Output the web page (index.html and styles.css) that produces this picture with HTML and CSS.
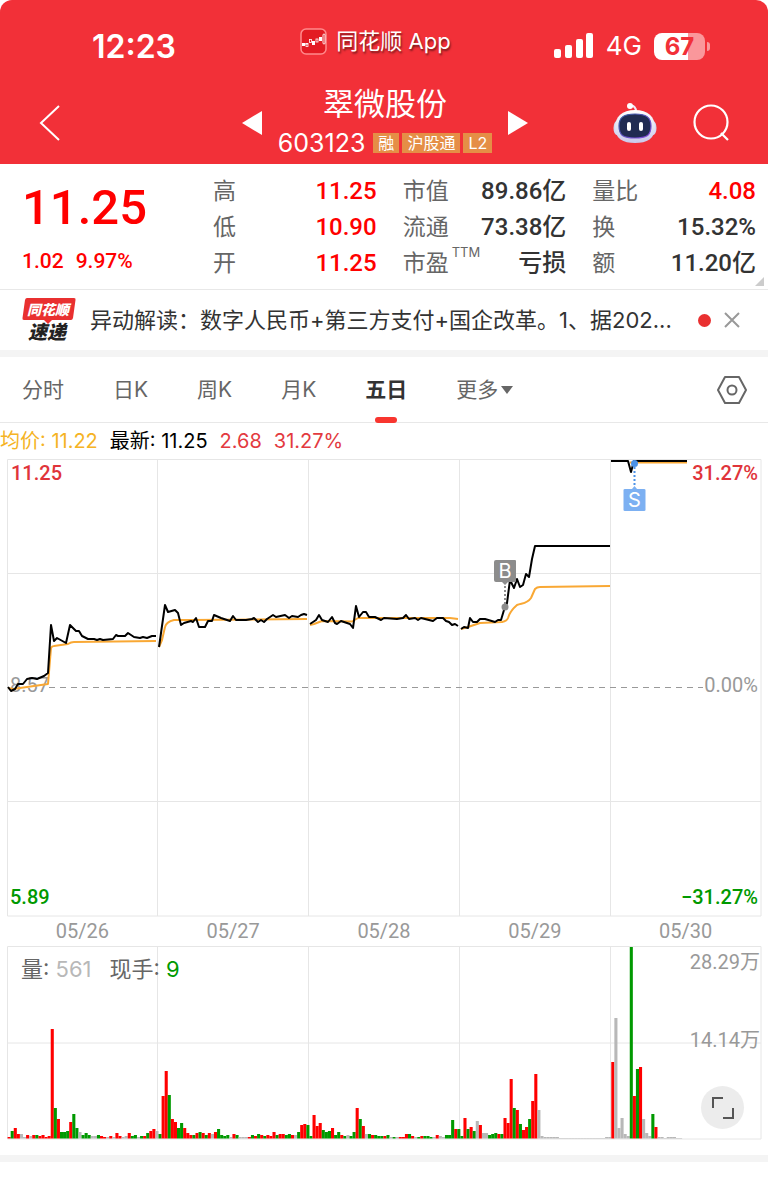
FILE: index.html
```
<!DOCTYPE html>
<html lang="zh-CN">
<head>
  <meta charset="UTF-8">
  <meta name="viewport" content="width=device-width, initial-scale=1.0">
  <title>翠微股份 603123</title>
  <link rel="stylesheet" href="styles.css">
</head>
<body>
  <header class="header">
    <div class="status-bar">
      <div class="clock">12:23</div>
      <div class="app-name">
        <svg class="app-logo" viewBox="0 0 27 27" width="27" height="27" fill="none">
          <rect x="1" y="1" width="25" height="25" rx="5" fill="#e31b23" stroke="#ff8a8c" stroke-width="1.5"/>
          <path d="M2 17h3M4 16h4" stroke="#fff"/>
          <rect x="2" y="15" width="3" height="3" fill="#fff"/>
          <rect x="6" y="15.500" width="2" height="3" stroke="#fff" stroke-width=".8"/>
          <rect x="9.500" y="11.500" width="2" height="3" stroke="#fff" stroke-width=".8"/>
          <rect x="12" y="13" width="3" height="4" fill="#fff"/>
          <rect x="16" y="11" width="2" height="3" stroke="#fff" stroke-width=".8"/>
          <rect x="19" y="9" width="3" height="4" fill="#fff"/>
          <rect x="23" y="6" width="2" height="10" rx="1" stroke="#fff" stroke-width=".9"/>
        </svg>
        <span>同花顺 App</span>
      </div>
      <div class="status-icons">
        <svg viewBox="0 0 40 26" width="40" height="26" fill="#fff">
          <rect x="0" y="16" width="7" height="9" rx="2"/>
          <rect x="11" y="12" width="7" height="13" rx="2"/>
          <rect x="22" y="6" width="7" height="19" rx="2"/>
          <rect x="32" y="0" width="7" height="25" rx="2"/>
        </svg>
        <span class="network">4G</span>
        <div class="battery">67</div>
      </div>
    </div>

    <div class="nav">
      <button class="icon-button" aria-label="返回">
        <svg viewBox="0 0 22 38" width="22" height="38" fill="none" stroke="#fff" stroke-width="2">
          <path d="M20 2L2 19L20 36"/>
        </svg>
      </button>
      <div class="stock">
        <button class="icon-button" aria-label="上一只">
          <svg viewBox="0 0 20 24" width="20" height="24" fill="#fff"><path d="M0 12L20 0V24Z"/></svg>
        </button>
        <div class="stock-title">
          <h1 class="stock-name">翠微股份</h1>
          <div class="stock-code">
            <span>603123</span>
            <span class="tag">融</span>
            <span class="tag">沪股通</span>
            <span class="tag">L2</span>
          </div>
        </div>
        <button class="icon-button" aria-label="下一只">
          <svg viewBox="0 0 20 24" width="20" height="24" fill="#fff"><path d="M20 12L0 0V24Z"/></svg>
        </button>
      </div>
      <div class="nav-actions">
        <button class="icon-button" aria-label="智能助手">
          <svg viewBox="0 0 44 42" width="44" height="42">
            <defs>
              <linearGradient id="shell" x1="0" y1="0" x2="0" y2="1">
                <stop offset="0" stop-color="#fff"/>
                <stop offset="1" stop-color="#c9c9ea"/>
              </linearGradient>
              <linearGradient id="rim" x1="0" y1="0" x2="1" y2="1">
                <stop offset="0" stop-color="#2f5a9e"/>
                <stop offset="1" stop-color="#8a4be0"/>
              </linearGradient>
            </defs>
            <path d="M17 4Q23 3 23 10" fill="none" stroke="#f3e7f5" stroke-width="2"/>
            <circle cx="17" cy="4" r="3" fill="#fff"/>
            <ellipse cx="4" cy="26" rx="3.500" ry="7" fill="#d5d8f2"/>
            <ellipse cx="40" cy="26" rx="3.500" ry="7" fill="#d5d8f2"/>
            <path d="M22 8C35 8 42 15 42 25C42 37 34 41 22 41C10 41 2 37 2 25C2 15 9 8 22 8Z" fill="url(#shell)"/>
            <path d="M22 12C33 12 38 15 38 24C38 34 33 36 22 36C11 36 6 34 6 24C6 15 11 12 22 12Z" fill="#202b52" stroke="url(#rim)" stroke-width="1.200"/>
            <rect x="14" y="20" width="4" height="9" rx="2" fill="#fff"/>
            <rect x="26" y="20" width="4" height="9" rx="2" fill="#fff"/>
          </svg>
        </button>
        <button class="icon-button" aria-label="搜索">
          <svg viewBox="0 0 38 38" width="38" height="38" fill="none" stroke="#fff" stroke-width="2.200">
            <circle cx="18" cy="18" r="16.500"/>
            <path d="M28 29L35 36"/>
          </svg>
        </button>
      </div>
    </div>
  </header>

  <section class="quote">
    <div class="price-block">
      <div class="price">11.25</div>
      <div class="change"><span>1.02</span><span>9.97%</span></div>
    </div>
    <dl class="stats">
      <div class="stat"><dt>高</dt><dd class="up">11.25</dd></div>
      <div class="stat"><dt>市值</dt><dd>89.86亿</dd></div>
      <div class="stat"><dt>量比</dt><dd class="up">4.08</dd></div>
      <div class="stat"><dt>低</dt><dd class="up">10.90</dd></div>
      <div class="stat"><dt>流通</dt><dd>73.38亿</dd></div>
      <div class="stat"><dt>换</dt><dd>15.32%</dd></div>
      <div class="stat"><dt>开</dt><dd class="up">11.25</dd></div>
      <div class="stat"><dt>市盈<sup>TTM</sup></dt><dd>亏损</dd></div>
      <div class="stat"><dt>额</dt><dd>11.20亿</dd></div>
    </dl>
    <span class="expand-corner"></span>
  </section>

  <section class="news">
    <svg class="news-badge" viewBox="0 0 54 54" width="54" height="54">
      <path d="M5 5H52Q54 5 53.500 7L51 25Q50.500 27 49 27H30L26 31L22 27H2Q0 27 .500 25L3 7Q3.500 5 5 5Z" fill="#e93030"/>
      <text x="26" y="22" class="badge-top">同花顺</text>
      <text x="25" y="46" class="badge-bottom">速递</text>
    </svg>
    <a class="news-text" href="#">异动解读：数字人民币+第三方支付+国企改革。1、据202...</a>
    <span class="news-dot"></span>
    <button class="icon-button" aria-label="关闭">
      <svg viewBox="0 0 16 16" width="16" height="16" stroke="#999" stroke-width="2"><path d="M1 1L15 15M15 1L1 15"/></svg>
    </button>
  </section>

  <nav class="tabs">
    <button class="tab">分时</button>
    <button class="tab">日K</button>
    <button class="tab">周K</button>
    <button class="tab">月K</button>
    <button class="tab tab-active">五日</button>
    <button class="tab">更多<span class="caret"></span></button>
    <button class="icon-button settings" aria-label="设置">
      <svg viewBox="0 0 32 30" width="32" height="30" fill="none" stroke="#666" stroke-width="2">
        <path d="M9 2H23L30 15L23 28H9L2 15Z" stroke-linejoin="round"/>
        <circle cx="16" cy="15" r="4.500"/>
      </svg>
    </button>
  </nav>

  <div class="legend">
    <span class="legend-avg">均价: 11.22</span>
    <span>最新: 11.25</span>
    <span class="legend-up">2.68</span>
    <span class="legend-up">31.27%</span>
  </div>

  <svg class="chart" viewBox="0 0 768 460">
    <g class="grid-lines">
      <path d="M7.500 2.500H761V459H7.500Z"/>
      <path d="M157.500 2V459M308.500 2V459M459.500 2V459M610.500 2V459"/>
      <path d="M7 116.500H761M7 344.500H761"/>
    </g>
    <path class="base-line" d="M49 230.500H703"/>
    <text x="10" y="235" class="label label-base">8.57</text>
    <text x="758" y="235" class="label label-base label-end">0.00%</text>

    <g class="line line-avg">
      <path d="M8 231L13 232L20 231L48 227L51 191Q52 189 54 189L68 187Q71 185 74 185L156 184"/>
      <path d="M159 190L162 183L165 170Q166 165 174 163H190L307 162"/>
      <path d="M310 168L314 167L322 164L352 164.500L358 161H450L458 162"/>
      <path d="M461 172L468 170L480 166L502 165Q507 164 508 161Q510 154 517 148C522 146 527 147 531 141L535 132Q537 130 540 130L610 129"/>
      <path d="M630 5.500H687"/>
    </g>
    <g class="line line-price">
      <path d="M8 230L11 234L15 232L18 227H23L27 222L32 221L37 222L44 219L48 216L51 168L54 184L57 181L66 186L70 168L76 174H79L82 179L88 182H94L97 183L100 182L103 183L113 182L116 178L118 179H125L128 176L134 180L140 181L143 180L147 181L152 179H156"/>
      <path d="M159 190L165 148L168 155L175 153L178 156L181 168L184 166L191 164L193 165L196 161L199 170H205L208 164H212L214 158L221 161L230 164L233 159L236 163H246L252 162L254 161L258 165L261 163L264 165L267 162L273 158L276 160L285 158L289 161L292 159L298 160L301 158L304 157L307 158"/>
      <path d="M310 167L316 163L319 158L322 163L328 165L332 160L335 166L337 167L341 164L350 167L353 171L356 149L359 160L363 155H366L369 160H375L381 163L384 161L397 162L403 161L406 158L409 162L415 161L418 163L421 161L433 164L437 161H443L446 164L449 165L452 168L455 167L458 169"/>
      <path d="M461 172L464 170L468 171L470 161L473 165H477L480 162H485L495 165L498 163H501L504 153L507 146L510 123L514 131L517 122L520 130L523 128L526 117L529 120L532 102L535 89H610"/>
      <path d="M611 4H628L631 15L634 4H687"/>
    </g>

    <g class="marker marker-buy">
      <path d="M505 129V147" class="marker-stem"/>
      <circle cx="505" cy="150" r="3.500"/>
      <path d="M496 103H515Q516 103 516 104V124Q516 125 515 125H508L505 128L502 125H496Q494 125 494 123V105Q494 103 496 103Z"/>
      <text x="505" y="121">B</text>
    </g>
    <g class="marker marker-sell">
      <path d="M634.500 10V29" class="marker-stem"/>
      <circle cx="634.500" cy="6.500" r="3.500"/>
      <path d="M625 32H632L634.500 29L637 32H644Q645.500 32 645.500 33V53Q645.500 54 644 54H625Q623.500 54 623.500 53V33Q623.500 32 625 32Z"/>
      <text x="634.500" y="50">S</text>
    </g>

    <text x="11" y="23" class="label label-up">11.25</text>
    <text x="758" y="23" class="label label-up label-end">31.27%</text>
    <text x="10" y="447" class="label label-down">5.89</text>
    <text x="758" y="447" class="label label-down label-end">−31.27%</text>
  </svg>

  <div class="dates">
    <span>05/26</span>
    <span>05/27</span>
    <span>05/28</span>
    <span>05/29</span>
    <span>05/30</span>
  </div>

  <div class="volume">
    <svg class="chart" viewBox="0 0 768 196">
      <g class="grid-lines">
        <path d="M7.500 1.500H761V194H7.500Z"/>
        <path d="M157.500 2V194M308.500 2V194M459.500 2V194M610.500 2V194"/>
        <path d="M7 98H761"/>
      </g>
      <g id="volume-bars"></g>
      <text x="760" y="24" class="label label-volume label-end">28.29万</text>
      <text x="760" y="102" class="label label-volume label-end">14.14万</text>
    </svg>
    <div class="volume-legend">
      <span>量: <em class="muted">561</em></span>
      <span>现手: <em class="down">9</em></span>
    </div>
    <button class="fullscreen" aria-label="全屏">
      <svg viewBox="0 0 24 24" width="24" height="24" fill="none" stroke="#555" stroke-width="2">
        <path d="M2 12V2H12M22 12V22H12"/>
      </svg>
    </button>
  </div>

  <div class="section-gap"></div>

  <script>
    // r = up, g = down, n = flat; 49 bars per trading day
    const volumes = [
      'r1 g7 r10 r4 n4 n1 r3 n2 r3 g3 r2 r3 r1 r2 r109 g30 r19 g6 g6 g7 r16 g24 g10 n6 g3 g5 g3 n2 n2 g3 r2 r1 n1 r2 n1 r5 r2 n1 n2 r5 g2 g3 n1 g2 r2 g5 r7 r9 n7',
      'g4 r42 r67 g43 r19 r16 g10 g15 r10 r5 r3 g3 r5 g6 r5 g3 r5 n4 r6 g9 g3 g2 g3 n1 r4 g3 n1 n1 n1 r1 g3 r2 g4 r3 g2 r3 r2 r6 g3 r4 r4 g3 g4 r3 n3 g6 r13 r14 g13',
      'g2 r23 r12 r15 g8 g6 g7 r10 g3 g6 r3 g2 n3 g2 g6 r30 g19 r12 n4 g4 r3 g3 g2 g2 r2 g3 n1 g1 n1 r1 r1 r4 g4 r2 n1 g1 r2 g2 g2 g1 n1 r3 n2 n1 g3 g3 g18 r9 g9',
      'g2 r20 g9 r11 g7 n17 r13 n5 n5 g3 g4 g5 r4 g4 r20 r15 r59 g30 r28 g14 r8 r11 g19 r37 r64 n28 n2 n1 n1 n1 n1 n1 n0 n0 n0 n0 n0 n0 n0 n0 n0 n0 n0 n0 n0 n0 n0 n1 n1',
      'r76 n120 n10 n20 n4 n2 g191 r42 g69 r71 n19 n5 n2 g24 r11 n1 n1 n0 n1 n1 n1 n0 n0'
    ];
    const colors = { r: '#ff0000', g: '#009900', n: '#b8b8b8' };
    const barsGroup = document.getElementById('volume-bars');
    const baseLine = 193;

    volumes.join(' ').split(' ').forEach((bar, i) => {
      const height = Number(bar.slice(1));
      const rect = document.createElementNS('http://www.w3.org/2000/svg', 'rect');
      rect.setAttribute('x', 7.6 + i * 3.08);
      rect.setAttribute('y', baseLine - height);
      rect.setAttribute('width', 3.08);
      rect.setAttribute('height', height + 0.5);
      rect.setAttribute('fill', colors[bar[0]]);
      barsGroup.appendChild(rect);
    });
  </script>
</body>
</html>
```
FILE: styles.css
```
* {
  box-sizing: border-box;
}
body {
  font-family: Inter, "Noto Sans CJK SC", sans-serif;
  margin: 0;
  background-color: #fff;
  color: #333;
  min-height: 100vh;
}
svg {
  display: block;
}
button {
  font-family: inherit;
  background: none;
  border: none;
  padding: 0;
  cursor: pointer;
}
.header {
  background-color: #f23038;
  border-radius: 12px 12px 0 0;
  color: #fff;
  height: 164px;
}
.status-bar {
  display: grid;
  grid-template-columns: 1fr auto 1fr;
  align-items: center;
  padding: 20px 59px 0 42px;
  height: 72px;
}
.clock {
  font-size: 32px;
  font-weight: 600;
  padding-left: 50px;
}
.app-name {
  display: flex;
  align-items: center;
  gap: 9px;
  font-size: 22px;
  line-height: 24px;
  padding-bottom: 10px;
  white-space: nowrap;
  text-shadow: 1px 2px 2px rgba(0, 0, 0, 0.5);
}
.status-icons {
  display: flex;
  align-items: center;
  justify-content: flex-end;
  gap: 12px;
}
.network {
  font-size: 26px;
  line-height: 26px;
}
.battery {
  position: relative;
  width: 51px;
  height: 27px;
  margin-right: 4px;
  border-radius: 8px;
  background: linear-gradient(90deg, #fff 67%, #fa979b 67%);
  color: #f23038;
  font-size: 24px;
  font-weight: 700;
  line-height: 27px;
  text-align: center;
}
.battery::after {
  content: "";
  position: absolute;
  right: -5px;
  top: 9px;
  width: 3px;
  height: 9px;
  border-radius: 0 4px 4px 0;
  background-color: #fa979b;
}
.nav {
  display: grid;
  grid-template-columns: 1fr auto 1fr;
  align-items: center;
  padding: 12px 37px 0 39px;
}
.stock {
  display: flex;
  align-items: center;
  gap: 16px;
}
.stock-title {
  text-align: center;
}
.stock-name {
  margin: 0;
  font-size: 31px;
  font-weight: 400;
  line-height: 40px;
}
.stock-code {
  display: flex;
  align-items: center;
  gap: 3px;
  font-size: 25px;
  line-height: 38px;
}
.tag {
  background-color: #e58e46;
  font-size: 16px;
  line-height: 20px;
  padding: 0 5px;
}
.stock-code span:first-child {
  margin-right: 5px;
}
.nav-actions {
  display: flex;
  align-items: center;
  justify-content: flex-end;
  gap: 36px;
}
.quote {
  position: relative;
  display: flex;
  padding: 9px 12px 8px 22px;
  border-bottom: 1px solid #e8e8e8;
}
.price-block {
  flex: 1;
  color: #ff0000;
  font-family: Roboto, sans-serif;
  font-weight: 500;
}
.price {
  font-size: 49px;
  line-height: 70px;
}
.change {
  display: flex;
  gap: 12px;
  font-size: 21px;
  line-height: 36px;
}
.stats {
  display: grid;
  grid-template-columns: repeat(3, 1fr);
  column-gap: 26px;
  width: 74%;
  max-width: 543px;
  margin: 0;
}
.stat {
  display: flex;
  justify-content: space-between;
  line-height: 36px;
  height: 36px;
  white-space: nowrap;
}
.stat dt {
  color: #666;
  font-size: 23px;
}
.stat sup {
  font-size: 13px;
  line-height: 0;
  vertical-align: 14px;
  margin-left: 3px;
}
.stat dd {
  margin: 0;
  font-family: Roboto, "Noto Sans CJK SC", sans-serif;
  font-size: 24px;
  font-weight: 500;
}
.stat .up {
  color: #ff0000;
}
.expand-corner {
  position: absolute;
  right: 4px;
  bottom: 3px;
  border-left: 9px solid transparent;
  border-bottom: 9px solid #ccc;
}
.news {
  display: flex;
  align-items: center;
  height: 67px;
  padding: 0 28px 0 22px;
  border-bottom: 7px solid #f4f4f4;
}
.news-badge {
  flex-shrink: 0;
  font-family: "Noto Sans CJK SC", sans-serif;
  font-style: italic;
  font-weight: 900;
  text-anchor: middle;
}
.badge-top {
  font-size: 14px;
  fill: #fff;
}
.badge-bottom {
  font-size: 19px;
  fill: #222;
}
.news-text {
  flex: 1;
  margin-left: 14px;
  color: #333;
  font-size: 22px;
  line-height: 36px;
  text-decoration: none;
  white-space: nowrap;
  overflow: hidden;
}
.news-dot {
  width: 13px;
  height: 13px;
  margin: 0 13px 0 15px;
  border-radius: 50%;
  background-color: #e93030;
}
.tabs {
  display: flex;
  align-items: center;
  gap: 49px;
  height: 66px;
  padding: 0 20px 0 22px;
  border-bottom: 1px solid #e8e8e8;
}
.tab {
  position: relative;
  display: flex;
  align-items: center;
  color: #666;
  font-size: 21px;
  line-height: 32px;
}
.tab-active {
  color: #333;
  font-weight: 700;
}
.tab-active::after {
  content: "";
  position: absolute;
  left: 50%;
  bottom: -17px;
  width: 22px;
  height: 6px;
  margin-left: -11px;
  border-radius: 3px;
  background-color: #f8352f;
}
.caret {
  margin-left: 3px;
  border: 6px solid transparent;
  border-top: 8px solid #666;
  border-bottom: 0;
}
.settings {
  margin-left: auto;
}
.legend {
  display: flex;
  gap: 12px;
  height: 34px;
  color: #000;
  font-size: 20px;
  line-height: 36px;
}
.legend-avg {
  color: #f5b324;
}
.legend-up {
  color: #e33a3f;
}
.chart {
  width: 100%;
  height: auto;
}
.grid-lines path {
  fill: none;
  stroke: #e6e6e6;
}
.base-line {
  stroke: #999;
  stroke-dasharray: 6 5;
}
.line {
  fill: none;
  stroke-width: 2;
  stroke-linejoin: round;
}
.line-avg {
  stroke: #f9a834;
}
.line-price {
  stroke: #000;
}
.label {
  font-family: Roboto, "Noto Sans CJK SC", sans-serif;
  font-size: 20px;
  font-weight: 500;
}
.label-end {
  text-anchor: end;
}
.label-up {
  fill: #e0343a;
}
.label-down {
  fill: #009900;
}
.label-base,
.label-volume {
  fill: #999;
  font-weight: 400;
}
.marker text {
  fill: #fff;
  font-size: 20px;
  text-anchor: middle;
}
.marker-stem {
  stroke-width: 2;
  stroke-dasharray: 2 2;
}
.marker-buy {
  fill: #8c8c8c;
}
.marker-buy .marker-stem {
  stroke: #8c8c8c;
}
.marker-sell {
  fill: #7cb0f2;
}
.marker-sell circle {
  fill: #4b92e8;
}
.marker-sell .marker-stem {
  stroke: #4b92e8;
}
.dates {
  display: grid;
  grid-template-columns: repeat(5, 1fr);
  padding: 0 7px;
  color: #999;
  font-family: Roboto, sans-serif;
  font-size: 20px;
  line-height: 28px;
  text-align: center;
}
.volume {
  position: relative;
}
.volume-legend {
  position: absolute;
  left: 21px;
  top: 8px;
  display: flex;
  gap: 18px;
  color: #666;
  font-size: 22px;
  line-height: 32px;
}
.volume-legend em {
  font-style: normal;
}
.muted {
  color: #b8b8b8;
}
.down {
  color: #009900;
}
.fullscreen {
  position: absolute;
  right: 24px;
  bottom: 12px;
  display: flex;
  align-items: center;
  justify-content: center;
  width: 43px;
  height: 43px;
  border-radius: 50%;
  background-color: #ececec;
}
.section-gap {
  height: 7px;
  margin-top: 14px;
  background-color: #f4f4f4;
}
```
